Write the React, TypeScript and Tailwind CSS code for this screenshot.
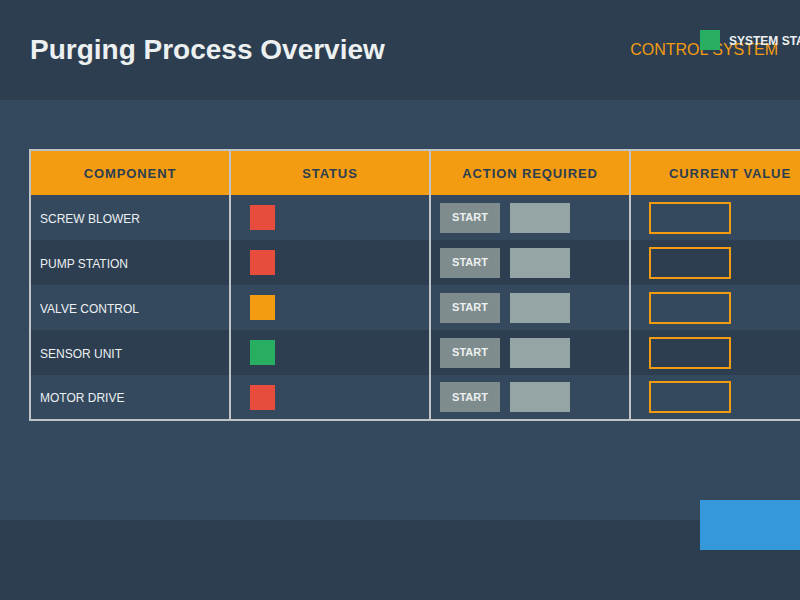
import React from "react";

type Row = { name: string; status: "red" | "orange" | "green" };

const rows: Row[] = [
  { name: "SCREW BLOWER", status: "red" },
  { name: "PUMP STATION", status: "red" },
  { name: "VALVE CONTROL", status: "orange" },
  { name: "SENSOR UNIT", status: "green" },
  { name: "MOTOR DRIVE", status: "red" },
];

const statusColor: Record<Row["status"], string> = {
  red: "bg-[#e74c3c]",
  orange: "bg-[#f39c12]",
  green: "bg-[#27ae60]",
};

const cell = "w-[200px] shrink-0 border-r-2 border-[#bdc3c7] flex items-center";

export default function App() {
  return (
    <div className="relative w-[800px] h-[600px] overflow-hidden bg-[#2c3e50] font-['Liberation_Sans',Arial,sans-serif]">
      {/* Header */}
      <header className="relative h-[100px] flex items-center justify-between pl-[30px] pr-[22px] bg-[#2c3e50]">
        <h1 className="text-[28px] font-bold text-[#ecf0f1] leading-none">
          Purging Process Overview
        </h1>
        <span className="text-[16px] text-[#f39c12] leading-none">CONTROL SYSTEM</span>
        <div className="absolute left-[700px] top-[30px] flex items-start">
          <span className="w-[20px] h-[20px] bg-[#27ae60]" />
          <span className="ml-[9px] mt-[5px] text-[12px] font-bold text-[#ecf0f1] leading-none whitespace-nowrap">
            SYSTEM STATUS
          </span>
        </div>
      </header>

      {/* Main */}
      <main className="h-[420px] bg-[#34495e] pt-[49px] pl-[29px]">
        <div className="w-[802px] border-t-2 border-l-2 border-b-2 border-[#bdc3c7]">
          <div className="flex h-[44px] bg-[#f39c12]">
            {["COMPONENT", "STATUS", "ACTION REQUIRED", "CURRENT VALUE"].map((h) => (
              <div
                key={h}
                className={`${cell} justify-center pt-[2px] text-[13px] font-bold tracking-[0.9px] text-[#2c3e50]`}
              >
                {h}
              </div>
            ))}
          </div>
          {rows.map((r, i) => (
            <div
              key={r.name}
              className={`flex ${i === rows.length - 1 ? "h-[44px]" : "h-[45px]"} ${
                i % 2 === 0 ? "bg-[#34495e]" : "bg-[#2c3e50]"
              }`}
            >
              <div className={`${cell} pl-[9px] pt-[2px] text-[12px] text-[#ecf0f1]`}>
                {r.name}
              </div>
              <div className={`${cell} pl-[19px]`}>
                <span className={`w-[25px] h-[25px] ${statusColor[r.status]}`} />
              </div>
              <div className={`${cell} pl-[9px] gap-[10px]`}>
                <span className="w-[60px] h-[30px] bg-[#7f8c8d] flex items-center justify-center text-[11px] font-bold text-[#ecf0f1]">
                  START
                </span>
                <span className="w-[60px] h-[30px] bg-[#95a5a6]" />
              </div>
              <div className={`${cell} pl-[18px]`}>
                <span className="w-[82px] h-[32px] border-2 border-[#f39c12]" />
              </div>
            </div>
          ))}
        </div>
      </main>

      {/* Footer */}
      <footer className="h-[80px] bg-[#2c3e50]" />
      <div className="absolute left-[700px] top-[500px] w-[100px] h-[50px] bg-[#3498db]" />
    </div>
  );
}
